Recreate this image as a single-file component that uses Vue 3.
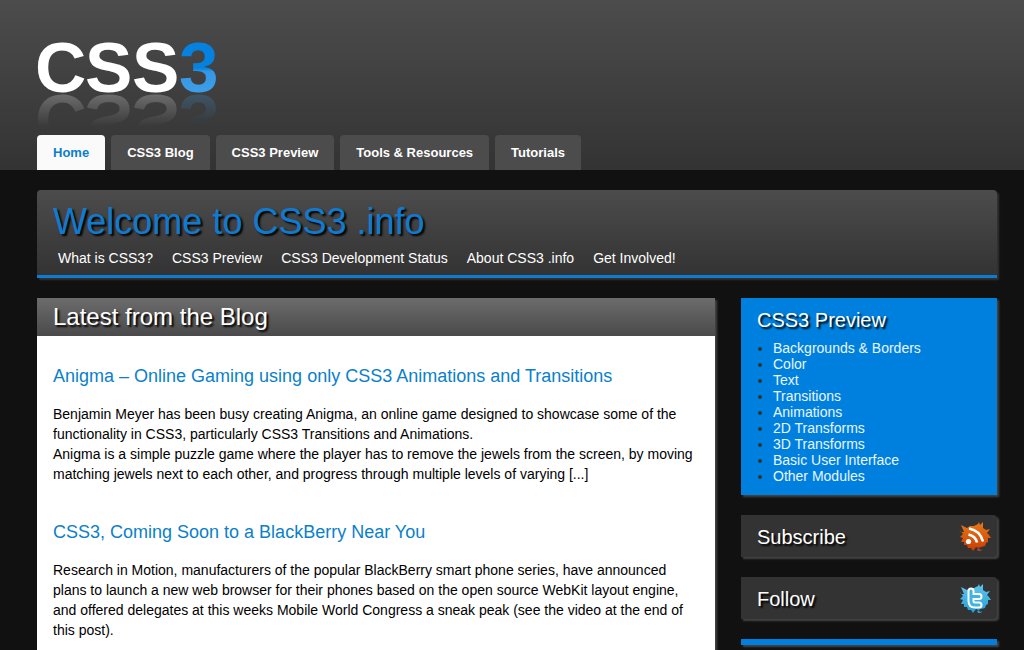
<script setup>
const tabs = ['Home', 'CSS3 Blog', 'CSS3 Preview', 'Tools & Resources', 'Tutorials']
const links = ['What is CSS3?', 'CSS3 Preview', 'CSS3 Development Status', 'About CSS3 .info', 'Get Involved!']
const posts = [
  {
    title: 'Anigma – Online Gaming using only CSS3 Animations and Transitions',
    paragraphs: [
      'Benjamin Meyer has been busy creating Anigma, an online game designed to showcase some of the functionality in CSS3, particularly CSS3 Transitions and Animations.',
      'Anigma is a simple puzzle game where the player has to remove the jewels from the screen, by moving matching jewels next to each other, and progress through multiple levels of varying [...]'
    ]
  },
  {
    title: 'CSS3, Coming Soon to a BlackBerry Near You',
    paragraphs: [
      'Research in Motion, manufacturers of the popular BlackBerry smart phone series, have announced plans to launch a new web browser for their phones based on the open source WebKit layout engine, and offered delegates at this weeks Mobile World Congress a sneak peak (see the video at the end of this post).'
    ]
  }
]
const modules = [
  'Backgrounds & Borders', 'Color', 'Text', 'Transitions', 'Animations',
  '2D Transforms', '3D Transforms', 'Basic User Interface', 'Other Modules'
]
const splat = 'M1 8 3 11 6 11 3 4 9 7 12 5 16 5 20 3 21 1 22 4 25 1 25 7 28 9 32 8 29 12 31 14 33 17 30 17 30 21 28 22 27 25 23 26 20 27 18 26 15 30 13 27 10 27 9 24 6 24 6 21 3 21 5 17 2 16 5 13Z'
const letterT = 'M13 8v10q0 4 4 4h4M13 13.500h8'
</script>

<template>
  <div class="page">
    <header class="top">
      <a class="logo" href="#">
        <svg width="184" height="56" viewBox="0 0 184 56">
          <defs>
            <linearGradient id="three" gradientUnits="userSpaceOnUse" x1="0" y1="0" x2="0" y2="56">
              <stop offset="0.54" stop-color="#0581df" />
              <stop offset="0.6" stop-color="#3497e6" />
              <stop offset="1" stop-color="#3f9ee8" />
            </linearGradient>
          </defs>
          <text class="letters" x="-2 48 95" y="54">CSS</text>
          <text class="letters three" x="142" y="54">3</text>
        </svg>
      </a>
      <nav class="tabs">
        <a v-for="(t, i) in tabs" :key="t" href="#" :class="{ active: i === 0 }">{{ t }}</a>
      </nav>
    </header>

    <section class="welcome">
      <h1>Welcome to CSS3 .info</h1>
      <nav class="links">
        <a v-for="l in links" :key="l" href="#">{{ l }}</a>
      </nav>
    </section>

    <div class="columns">
      <main class="blog">
        <h2>Latest from the Blog</h2>
        <article v-for="p in posts" :key="p.title">
          <h3><a href="#">{{ p.title }}</a></h3>
          <p v-for="x in p.paragraphs" :key="x">{{ x }}</p>
        </article>
      </main>

      <aside class="side">
        <section class="preview">
          <h2>CSS3 Preview</h2>
          <ul>
            <li v-for="m in modules" :key="m"><a href="#">{{ m }}</a></li>
          </ul>
        </section>

        <a class="box" href="#">
          <span>Subscribe</span>
          <svg width="34" height="32" viewBox="0 0 34 32">
            <defs>
              <linearGradient id="rss" x1="0" y1="0" x2="0" y2="1">
                <stop offset="0" stop-color="#e87a18" />
                <stop offset="1" stop-color="#c83c04" />
              </linearGradient>
            </defs>
            <path fill="url(#rss)" :d="splat" />
            <path fill="#9c4a3a" d="M19 28 21 27 22 29 24 28 23 30 20 30Z" />
            <circle cx="10.500" cy="20.500" r="2.600" fill="#fff" />
            <path fill="none" stroke="#fff" stroke-width="2.600" d="M10.500 13.500q7 1.500 8.500 8M11 7.500q11 2 14 13" />
          </svg>
        </a>

        <a class="box" href="#">
          <span>Follow</span>
          <svg width="34" height="32" viewBox="0 0 34 32">
            <defs>
              <linearGradient id="bird" x1="0" y1="0" x2="0" y2="1">
                <stop offset="0" stop-color="#63c5ec" />
                <stop offset="1" stop-color="#249fd7" />
              </linearGradient>
            </defs>
            <path fill="url(#bird)" :d="splat" />
            <path fill="#3b95bb" d="M19 28 21 27 22 29 24 28 23 30 20 30Z" />
            <g fill="none" stroke-linecap="round" stroke-linejoin="round">
              <path stroke="#fff" stroke-width="7" :d="letterT" />
              <path stroke="#3fb3e2" stroke-width="3" :d="letterT" />
            </g>
          </svg>
        </a>

        <div class="bar"></div>
      </aside>
    </div>
  </div>
</template>

<style>
html, body {
  background: #111;
  overflow: hidden;
}
</style>

<style scoped>
.page {
  box-sizing: border-box;
  height: 100vh;
  overflow: hidden;
  display: flex;
  flex-direction: column;
  background: #111;
  font: 14px/20px "Liberation Sans", Arial, sans-serif;
  color: #000;
}
a { text-decoration: none; color: inherit; }
h1, h2, h3, p, ul { margin: 0; padding: 0; font-weight: normal; }

.top {
  flex: none;
  display: flex;
  flex-direction: column;
  padding: 38px 27px 0 37px;
  background: linear-gradient(#4c4c4c, #333);
}
.logo {
  align-self: flex-start;
  margin-bottom: 41px;
}
.logo svg {
  display: block;
  overflow: visible;
  -webkit-box-reflect: below -1px linear-gradient(transparent 40%, rgba(255, 255, 255, 0.25));
}
.letters { font-size: 71px; font-weight: bold; fill: #fff; }
.three { fill: url(#three); }

.tabs { display: flex; gap: 6px; }
.tabs a {
  padding: 0 16px;
  border-radius: 4px 4px 0 0;
  background: #4c4c4c;
  color: #fff;
  font-size: 13px;
  font-weight: bold;
  line-height: 35px;
}
.tabs .active { background: #fafafa; color: #0b7fcb; }

.welcome {
  flex: none;
  margin: 20px 27px 20px 37px;
  padding: 12px 16px 7px;
  border-bottom: 3px solid #0f7bd0;
  border-radius: 4px 4px 0 0;
  background: linear-gradient(#4c4c4c, #333);
  box-shadow: 2px 2px 2px #333;
}
h1 {
  font-size: 36px;
  line-height: 40px;
  color: #0f7bd0;
  text-shadow: 2px 2px 2px #000;
}
.links {
  display: flex;
  gap: 19px;
  padding: 6px 5px 0;
  color: #fff;
}

.columns {
  flex: 1;
  min-height: 0;
  display: grid;
  grid-template-columns: minmax(0, 1fr) 256px;
  gap: 26px;
  padding: 0 27px 0 37px;
}
.blog {
  background: #fff;
  box-shadow: 2px 2px 2px #444;
}
.blog h2 {
  padding: 0 16px;
  font-size: 24px;
  line-height: 38px;
  color: #fff;
  background: linear-gradient(#6c6c6c, #4a4a4a);
  text-shadow: 2px 2px 2px #000;
}
article { padding: 28px 16px 8px; }
h3 {
  margin-bottom: 16px;
  font-size: 18px;
  line-height: 24px;
  color: #0b7fcb;
}

.side {
  display: flex;
  flex-direction: column;
  gap: 20px;
}
.side h2, .box {
  font-size: 20px;
  color: #fff;
  text-shadow: 2px 2px 2px #000;
}
.preview {
  padding: 10px 16px 11px;
  background: #0080de;
  box-shadow: 2px 2px 2px #444;
}
.side h2 { line-height: 24px; margin-bottom: 8px; }
.preview ul { padding-left: 16px; line-height: 16px; color: #e8f6ff; }
.preview li::marker { color: #333; }
.box {
  box-sizing: border-box;
  display: flex;
  align-items: center;
  justify-content: space-between;
  height: 42px;
  padding: 2px 5px 0 16px;
  background: #333;
  border-radius: 0 4px 4px 0;
  box-shadow: 2px 2px 2px #444;
}
.bar {
  height: 6px;
  background: #0080de;
  box-shadow: 2px 2px 2px #444;
}
</style>
